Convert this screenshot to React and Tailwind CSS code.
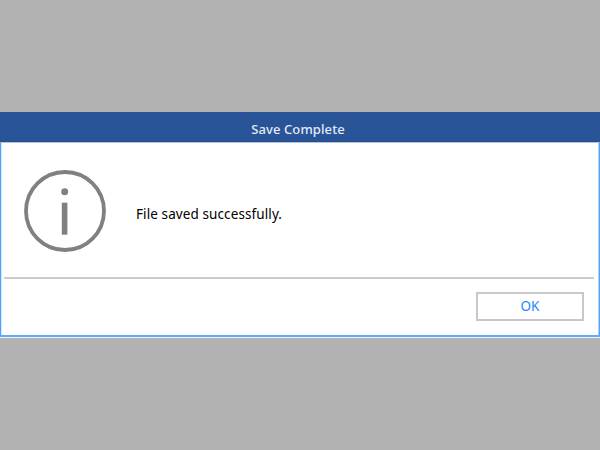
import { useState } from 'react';

const InfoIcon = () => (
  <svg className="w-[82px] h-[82px] shrink-0 text-[#808080]" viewBox="0 0 82 82" fill="none">
    <circle cx="41" cy="41" r="39" stroke="currentColor" strokeWidth="3.8" />
    <circle cx="40.7" cy="21.7" r="3.5" fill="currentColor" />
    <rect x="37.8" y="32.7" width="5.6" height="32" fill="currentColor" />
  </svg>
);

const App = () => {
  const [open, setOpen] = useState(true);

  return (
    <div className="h-screen flex items-center overflow-hidden bg-[#b2b2b2] font-['Noto_Sans',sans-serif]">
      {open && (
        <div role="dialog" className="w-full h-[226px] flex flex-col bg-white border-b border-[#f0f5fa]">
          <header className="h-[30px] shrink-0 flex items-center justify-center pt-1 pr-1 bg-[#2a5498] border-b border-[#264d8d]">
            <h1 className="text-[13px] leading-5 font-medium tracking-[0.1px] text-[#e4ebf6]">Save Complete</h1>
          </header>

          <div className="flex-1 flex flex-col border-x border-b-2 border-t border-x-[#4da3ff] border-b-[#5eacff] border-t-[#b5c4df] shadow-[inset_1px_0_#d3e8ff,inset_-1px_0_#a9d3ff]">
            <div className="h-[134px] flex items-center gap-[30px] pl-[23px] pt-px">
              <InfoIcon />
              <p className="pt-1.5 text-[13.5px] leading-5 tracking-[0.1px] text-black">File saved successfully.</p>
            </div>
            <div className="h-0.5 ml-[3px] mr-[5px] bg-[#cccccc]" />
            <div className="flex justify-end pt-[13px] pr-[15px]">
              <button
                onClick={() => setOpen(false)}
                className="w-[108px] h-[29px] pb-0.5 border-2 border-[#c8c8c8] bg-white text-[13.5px] leading-5 text-[#2488ff]"
              >
                OK
              </button>
            </div>
          </div>
        </div>
      )}
    </div>
  );
};

export default App;
